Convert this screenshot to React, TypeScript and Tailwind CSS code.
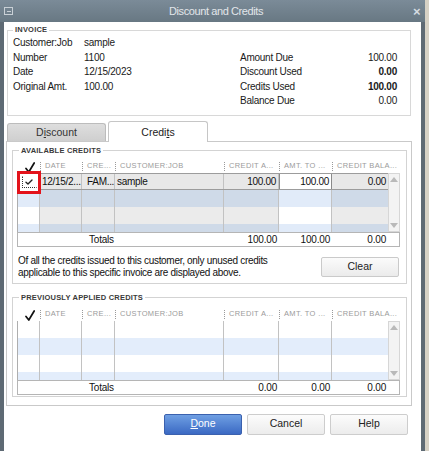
import React from "react";

const FONT = "font-['Liberation_Sans',Arial,sans-serif]";

const HEADERS = ["DATE", "CRE...", "CUSTOMER:JOB", "CREDIT A...", "AMT. TO ...", "CREDIT BALA..."];
const HEAD_W = ["w-[42px]", "w-[33px]", "w-[109px]", "w-[55px]", "w-[53px]", "w-[68px]"];

function HeadCheck() {
    return (
        <svg width="10" height="11" viewBox="0 0 10 11">
            <path d="M1 6.5 L3.8 10 L9.2 1" fill="none" stroke="#111" strokeWidth="1.7" strokeLinecap="round" strokeLinejoin="round" />
        </svg>
    );
}

function SmallCheck() {
    return (
        <svg width="8" height="6" viewBox="0 0 8 6">
            <path d="M1 3.2 L3 5 L7 1" fill="none" stroke="#222" strokeWidth="1.4" strokeLinecap="round" strokeLinejoin="round" />
        </svg>
    );
}

function HeaderRow() {
    return (
        <div className="flex h-[13px] items-center text-[7.5px] leading-none text-[#9b9b9b] tracking-[0.35px]">
            <div className="w-[23px] flex justify-center pl-[2px] pt-[3px]">
                <HeadCheck />
            </div>
            {HEADERS.map((h, i) => (
                <div key={h} className={`${HEAD_W[i]} flex items-center whitespace-nowrap overflow-hidden`}>
                    <span className="h-[9px] border-l border-dotted border-[#9a9a9a]" />
                    <span className="ml-[4px]">{h}</span>
                </div>
            ))}
        </div>
    );
}

function Scrollbar() {
    return (
        <div className="w-[12px] h-full bg-[#f3f3f3] border border-[#d6d6d6] flex flex-col items-center justify-between py-[3px]">
            <span className="w-0 h-0 border-x-[4px] border-x-transparent border-b-[5px] border-b-[#b9b9b9]" />
            <span className="w-0 h-0 border-x-[4px] border-x-transparent border-t-[5px] border-t-[#b9b9b9]" />
        </div>
    );
}

type Row = { bg: string; edit: string; check: string; sel?: boolean };

function BodyRow({ row, values }: { row: Row; values?: string[] }) {
    const v = values ?? ["", "", "", "", "", ""];
    const line = row.sel ? "border-y border-[#9c9c9c]" : "";
    return (
        <div className={`flex h-[17px] shrink-0 ${row.bg} ${line} text-[10px] tracking-[-0.3px] text-[#111]`}>
            <div className={`w-[22px] border-r border-[#c2c2c2] ${row.check}`} />
            <div className="w-[42px] border-r border-[#c2c2c2] pl-[2px] leading-[15px] whitespace-nowrap">{v[0]}</div>
            <div className="w-[33px] border-r border-[#c2c2c2] pl-[5px] leading-[15px] whitespace-nowrap">{v[1]}</div>
            <div className="w-[109px] border-r border-[#c2c2c2] pl-[2px] leading-[15px]">{v[2]}</div>
            <div className="w-[55px] border-r border-[#c2c2c2] pr-[2px] text-right leading-[15px]">{v[3]}</div>
            <div className={`w-[53px] border-r pr-[2px] text-right leading-[15px] ${row.edit} ${row.sel ? "border-l border-[#8a8a8a]" : "border-[#c2c2c2]"}`}>{v[4]}</div>
            <div className="w-[56px] pr-[2px] text-right leading-[15px]">{v[5]}</div>
        </div>
    );
}

function CreditTable({ rows, first, totals, marked }: { rows: Row[]; first?: string[]; totals: string[]; marked?: boolean }) {
    return (
        <div className="w-[383px]">
            <HeaderRow />
            <div className="relative flex h-[59px] border-l border-[#aeaeae]">
                <div className="w-[370px] flex flex-col overflow-hidden">
                    {rows.map((r, i) => (
                        <BodyRow key={i} row={r} values={i === 0 ? first : undefined} />
                    ))}
                </div>
                <Scrollbar />
                {marked && (
                    <div className="absolute -left-[1px] -top-[2px] w-[24px] h-[23px] border-[3px] border-[#e3131b] bg-white flex items-center justify-center">
                        <div className="w-[15px] h-[12px] border border-dotted border-[#333] border-t-transparent border-r-transparent flex items-center justify-center">
                            <SmallCheck />
                        </div>
                    </div>
                )}
            </div>
            <div className="flex h-[15px] border border-[#b5b5b5] bg-white text-[10px] tracking-[-0.2px] leading-[13px] text-[#111]">
                <div className="w-[206px] pl-[71px]">Totals</div>
                <div className="w-[55px] pr-[2px] text-right">{totals[0]}</div>
                <div className="w-[53px] pr-[2px] text-right">{totals[1]}</div>
                <div className="w-[56px] pr-[2px] text-right">{totals[2]}</div>
            </div>
        </div>
    );
}

function Group({ title, children, className }: { title: string; children: React.ReactNode; className?: string }) {
    return (
        <fieldset className={`border border-[#d3d3d3] ${className ?? ""}`}>
            <legend className="ml-[2px] px-[2px] text-[7.5px] leading-[10px] font-bold text-[#3a3a3a] tracking-[0.2px]">{title}</legend>
            {children}
        </fieldset>
    );
}

const AVAIL: Row[] = [
    { bg: "bg-[#e8e8e8]", edit: "bg-white", check: "bg-white", sel: true },
    { bg: "bg-[#cfdae8]", edit: "bg-[#e1ebf9]", check: "bg-[#e1ebf9]" },
    { bg: "bg-[#ebebeb]", edit: "bg-white", check: "bg-white" },
    { bg: "bg-[#cfdae8]", edit: "bg-[#e1ebf9]", check: "bg-[#e1ebf9]" },
];

const PREV: Row[] = [
    { bg: "bg-white", edit: "", check: "" },
    { bg: "bg-[#e3edfb]", edit: "", check: "" },
    { bg: "bg-white", edit: "", check: "" },
    { bg: "bg-[#e3edfb]", edit: "", check: "" },
];

export default function App() {
    return (
        <div className={`w-[429px] h-[451px] flex bg-[#d6d1c5] overflow-hidden ${FONT}`}>
            <div className="w-[425px] h-full flex flex-col bg-[#5e6a74]">
                {/* title bar */}
                <div className="h-[22px] shrink-0 flex items-center pl-[4px] pr-[4px] bg-linear-to-b from-[#7b8b98] to-[#687883]">
                    <div className="w-[9px] h-[8px] border border-[#c9d0d6] flex items-center justify-center">
                        <span className="w-[4px] h-px bg-[#c9d0d6]" />
                    </div>
                    <div className="flex-1 text-center text-[11px] tracking-[-0.4px] text-[#e2e6ea] pl-[6px]">Discount and Credits</div>
                    <div className="w-[8px] text-[13px] font-bold leading-none text-[#d6dce1]">×</div>
                </div>

                {/* body */}
                <div className="flex-1 mx-[4px] bg-white pl-[3px] pr-[13px] pt-[3px] text-[#1a1a1a]">
                    <fieldset className="w-[404px] border border-[#d8d8d8] pt-[1px] pb-[6px] pl-[5px] pr-[13px]">
                        <legend className="ml-0 px-[2px] text-[7.5px] leading-[10px] font-bold text-[#3a3a3a] tracking-[0.2px]">INVOICE</legend>
                        <div className="flex text-[10px] tracking-[-0.25px] leading-[14.5px]">
                            <div className="w-[227px] flex flex-col">
                                <div className="flex"><span className="w-[71px]">Customer:Job</span><span>sample</span></div>
                                <div className="flex"><span className="w-[71px]">Number</span><span>1100</span></div>
                                <div className="flex"><span className="w-[71px]">Date</span><span>12/15/2023</span></div>
                                <div className="flex"><span className="w-[71px]">Original Amt.</span><span>100.00</span></div>
                            </div>
                            <div className="flex-1 flex flex-col pt-[14.5px]">
                                <div className="flex justify-between"><span>Amount Due</span><span>100.00</span></div>
                                <div className="flex justify-between"><span>Discount Used</span><span className="font-bold">0.00</span></div>
                                <div className="flex justify-between"><span>Credits Used</span><span className="font-bold">100.00</span></div>
                                <div className="flex justify-between"><span>Balance Due</span><span>0.00</span></div>
                            </div>
                        </div>
                    </fieldset>

                    {/* tabs */}
                    <div className="flex items-end gap-[2px] mt-[5px] h-[20px]">
                        <div className="w-[99px] h-[18px] border border-b-0 border-[#bcbcbc] rounded-t-[3px] bg-linear-to-b from-[#dedede] to-[#cfcfcf] text-center text-[10.5px] leading-[17px] text-[#333]">
                            D<span className="underline">i</span>scount
                        </div>
                        <div className="relative z-10 w-[100px] h-[21px] -mb-px border border-b-0 border-[#c6c6c6] rounded-t-[3px] bg-white text-center text-[10.5px] leading-[20px] text-[#222]">
                            Credi<span className="underline">t</span>s
                        </div>
                    </div>

                    <div className="-ml-px w-[406px] border border-[#c9c9c9] pt-[4px] pl-[5px] pr-[4px] pb-[8px]">
                        <Group title="AVAILABLE CREDITS" className="w-[395px] pl-[4px] pr-[6px] pb-[4px]">
                            <div className="mt-[4px]">
                                <CreditTable
                                    rows={AVAIL}
                                    marked
                                    first={["12/15/2...", "FAM...", "sample", "100.00", "100.00", "0.00"]}
                                    totals={["100.00", "100.00", "0.00"]}
                                />
                            </div>
                            <div className="flex items-start mt-[8px]">
                                <p className="flex-1 pl-[1px] text-[10px] tracking-[-0.3px] leading-[12px] text-[#111]">
                                    Of all the credits issued to this customer, only unused credits
                                    <br />
                                    applicable to this specific invoice are displayed above.
                                </p>
                                <button className="mt-[2px] mr-[1px] w-[78px] h-[20px] border border-[#cacaca] rounded-[2px] bg-linear-to-b from-[#fbfbfb] to-[#ebebeb] text-[10.5px] text-[#222]">
                                    Clear
                                </button>
                            </div>
                        </Group>

                        <Group title="PREVIOUSLY APPLIED CREDITS" className="mt-[9px] w-[395px] pl-[4px] pr-[6px] pb-[1px]">
                            <div className="mt-[5px]">
                                <CreditTable rows={PREV} totals={["0.00", "0.00", "0.00"]} />
                            </div>
                        </Group>
                    </div>

                    {/* buttons */}
                    <div className="flex justify-end gap-[5px] mt-[8px]">
                        <button className="w-[78px] h-[21px] border border-[#3b61ae] rounded-[2px] bg-linear-to-b from-[#6f9fe3] to-[#3b69c3] text-[10.5px] text-white">
                            <span className="underline">D</span>one
                        </button>
                        <button className="w-[78px] h-[21px] border border-[#cdcdcd] rounded-[2px] bg-linear-to-b from-[#fcfcfc] to-[#ececec] text-[10.5px] text-[#222]">
                            Cancel
                        </button>
                        <button className="w-[78px] h-[21px] border border-[#cdcdcd] rounded-[2px] bg-linear-to-b from-[#fcfcfc] to-[#ececec] text-[10.5px] text-[#222]">
                            Help
                        </button>
                    </div>
                </div>
            </div>
        </div>
    );
}
